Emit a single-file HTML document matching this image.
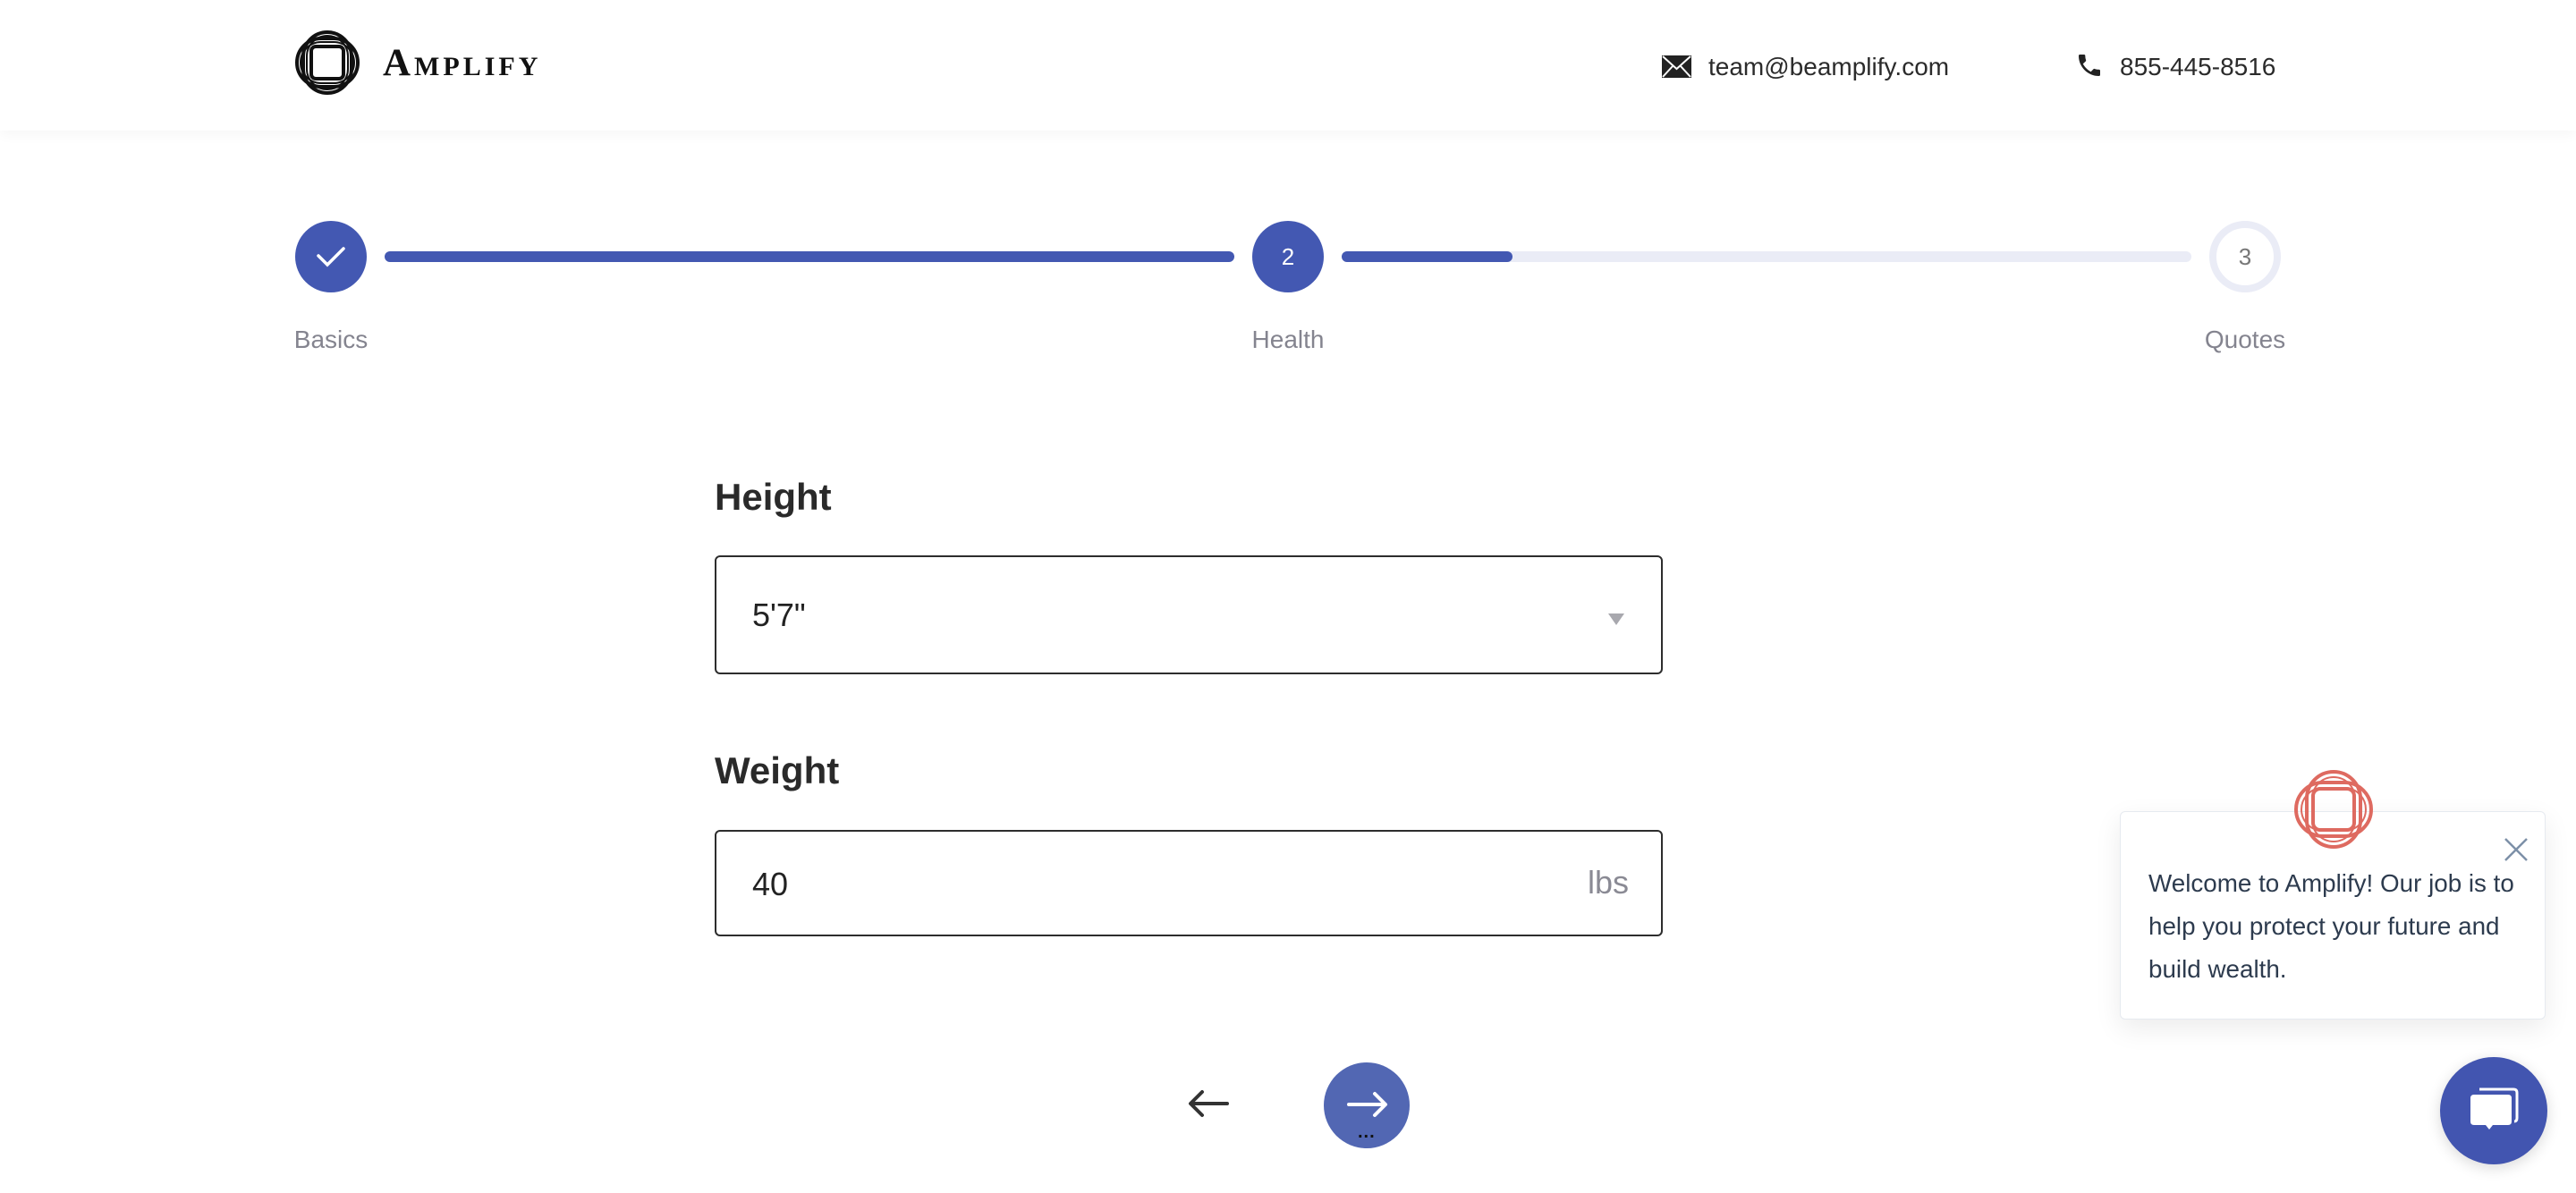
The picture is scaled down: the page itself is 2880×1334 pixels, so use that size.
<!DOCTYPE html>
<html><head><meta charset="utf-8"><style>
*{margin:0;padding:0;box-sizing:border-box}
body{width:2880px;height:1334px;background:#fff;position:relative;overflow:hidden;font-family:"Liberation Sans",sans-serif}
.hdr{position:absolute;left:0;top:0;width:2880px;height:146px;background:#fff;box-shadow:0 4px 14px rgba(0,0,0,0.04)}
.abs{position:absolute}
.brand{left:428px;top:46px;font-family:"Liberation Serif",serif;font-size:43px;font-weight:bold;letter-spacing:4px;color:#111;font-variant:small-caps}
.hdrtxt{font-size:28px;color:#2b2b2b;top:59px}
.circ{position:absolute;width:80px;height:80px;border-radius:50%;top:247px;display:flex;align-items:center;justify-content:center;font-size:26px}
.lbl{position:absolute;top:364px;font-size:28px;color:#84848f;width:160px;text-align:center}
.bar{position:absolute;top:281px;height:12px;border-radius:6px}
.flabel{position:absolute;left:799px;font-size:42px;font-weight:bold;color:#2a2a2a}
.box{position:absolute;left:799px;width:1060px;border:2px solid #2d2d2d;border-radius:6px}
</style></head><body>
<div class="hdr"></div>
<svg class="abs" style="left:326px;top:30px" width="80" height="80" viewBox="0 0 80 80">
<g fill="none" stroke="#111">
<rect x="6" y="13" width="68" height="54" rx="27" stroke-width="4"/>
<rect x="13" y="6" width="54" height="68" rx="27" stroke-width="4"/>
<rect x="10" y="17" width="60" height="46" rx="23" stroke-width="2"/>
<rect x="17" y="10" width="46" height="60" rx="23" stroke-width="2"/>
<rect x="22" y="22" width="36" height="36" rx="5" stroke-width="4"/>
</g></svg>
<div class="abs brand">Amplify</div>
<svg class="abs" style="left:1858px;top:62px" width="33" height="25" viewBox="0 0 33 25"><rect width="33" height="25" fill="#222"/><path d="M1 1 L16.5 15 L32 1 M1 24 L12 12 M32 24 L21 12" stroke="#fff" stroke-width="2" fill="none"/></svg>
<div class="abs hdrtxt" style="left:1910px">team@beamplify.com</div>
<svg class="abs" style="left:2320px;top:57px" width="32" height="32" viewBox="0 0 24 24"><path fill="#222" d="M6.6 10.8c1.4 2.8 3.8 5.1 6.6 6.6l2.2-2.2c.3-.3.7-.4 1-.2 1.1.4 2.3.6 3.6.6.6 0 1 .4 1 1V20c0 .6-.4 1-1 1C10.6 21 3 13.4 3 4c0-.6.4-1 1-1h3.5c.6 0 1 .4 1 1 0 1.3.2 2.5.6 3.6.1.3 0 .7-.2 1L6.6 10.8z"/></svg>
<div class="abs hdrtxt" style="left:2370px">855-445-8516</div>

<div class="circ" style="left:330px;background:#4358b2"><svg width="34" height="26" viewBox="0 0 34 26"><path d="M3 12 L13 22 L31 4" stroke="#fff" stroke-width="3.5" fill="none" stroke-linecap="round"/></svg></div>
<div class="bar" style="left:430px;width:950px;background:#4358b2"></div>
<div class="circ" style="left:1400px;background:#4358b2;color:#fff">2</div>
<div class="bar" style="left:1500px;width:950px;background:#eaecf6"></div>
<div class="bar" style="left:1500px;width:191px;background:#4358b2"></div>
<div class="circ" style="left:2470px;border:8px solid #eaecf6;color:#777">3</div>
<div class="lbl" style="left:290px">Basics</div>
<div class="lbl" style="left:1360px">Health</div>
<div class="lbl" style="left:2430px">Quotes</div>

<div class="flabel" style="top:532px">Height</div>
<div class="box" style="top:621px;height:133px"><div class="abs" style="left:40px;top:44px;font-size:36px;color:#222">5'7"</div><div class="abs" style="left:997px;top:63px;width:0;height:0;border-left:9px solid transparent;border-right:9px solid transparent;border-top:13px solid #a8a8ae"></div></div>
<div class="flabel" style="top:838px">Weight</div>
<div class="box" style="top:928px;height:119px"><div class="abs" style="left:40px;top:38px;font-size:36px;color:#222">40</div><div class="abs" style="right:36px;top:36px;font-size:36px;color:#8a8a94">lbs</div></div>

<svg class="abs" style="left:1326px;top:1216px" width="50" height="36" viewBox="0 0 50 36"><path d="M46 18 H6 M18 5 L5 18 L18 31" stroke="#333" stroke-width="4" fill="none" stroke-linecap="round" stroke-linejoin="round"/></svg>
<div class="abs" style="left:1480px;top:1188px;width:96px;height:96px;border-radius:50%;background:#5267b3"></div>
<svg class="abs" style="left:1506px;top:1220px" width="46" height="30" viewBox="0 0 46 30"><path d="M2 15 H42 M31 3 L43 15 L31 27" stroke="#fff" stroke-width="4" fill="none" stroke-linecap="round" stroke-linejoin="round"/></svg>
<div class="abs" style="left:1518px;top:1255px;font-size:20px;color:#111;font-weight:bold;letter-spacing:1px">...</div>

<div class="abs" style="left:2370px;top:907px;width:476px;height:233px;background:#fff;border:1px solid #e6eaf0;border-radius:6px;box-shadow:0 10px 30px rgba(0,0,0,0.08)"></div>
<svg class="abs" style="left:2564px;top:860px" width="90" height="90" viewBox="0 0 90 90"><g fill="none" stroke="#de6a60"><rect x="3" y="15" width="84" height="60" rx="30" stroke-width="4"/><rect x="15" y="3" width="60" height="84" rx="30" stroke-width="4"/><rect x="9" y="21" width="72" height="48" rx="24" stroke-width="2"/><rect x="21" y="9" width="48" height="72" rx="24" stroke-width="2"/><rect x="22" y="22" width="46" height="46" rx="8" stroke-width="4"/></g></svg>
<svg class="abs" style="left:2799px;top:936px" width="28" height="28" viewBox="0 0 28 28"><path d="M2 2 L26 26 M26 2 L2 26" stroke="#7d90a8" stroke-width="2.5"/></svg>
<div class="abs" style="left:2402px;top:964px;width:440px;font-size:27.8px;line-height:48px;color:#2d3b4e">Welcome to Amplify! Our job is to help you protect your future and build wealth.</div>
<div class="abs" style="left:2728px;top:1182px;width:120px;height:120px;border-radius:50%;background:#4255b0;box-shadow:0 4px 16px rgba(0,0,0,0.15)"></div>
<svg class="abs" style="left:2756px;top:1210px" width="64" height="64" viewBox="0 0 64 64"><path d="M16 8 H54 Q58 8 58 12 V40 Q58 44 55 44" stroke="#fff" stroke-width="3" fill="none"/><path d="M8 14 H48 Q52 14 52 18 V44 Q52 48 48 48 H31 L27 53 L23 48 H10 Q6 48 6 44 V18 Q6 14 10 14Z" fill="#fff"/></svg>
</body></html>
